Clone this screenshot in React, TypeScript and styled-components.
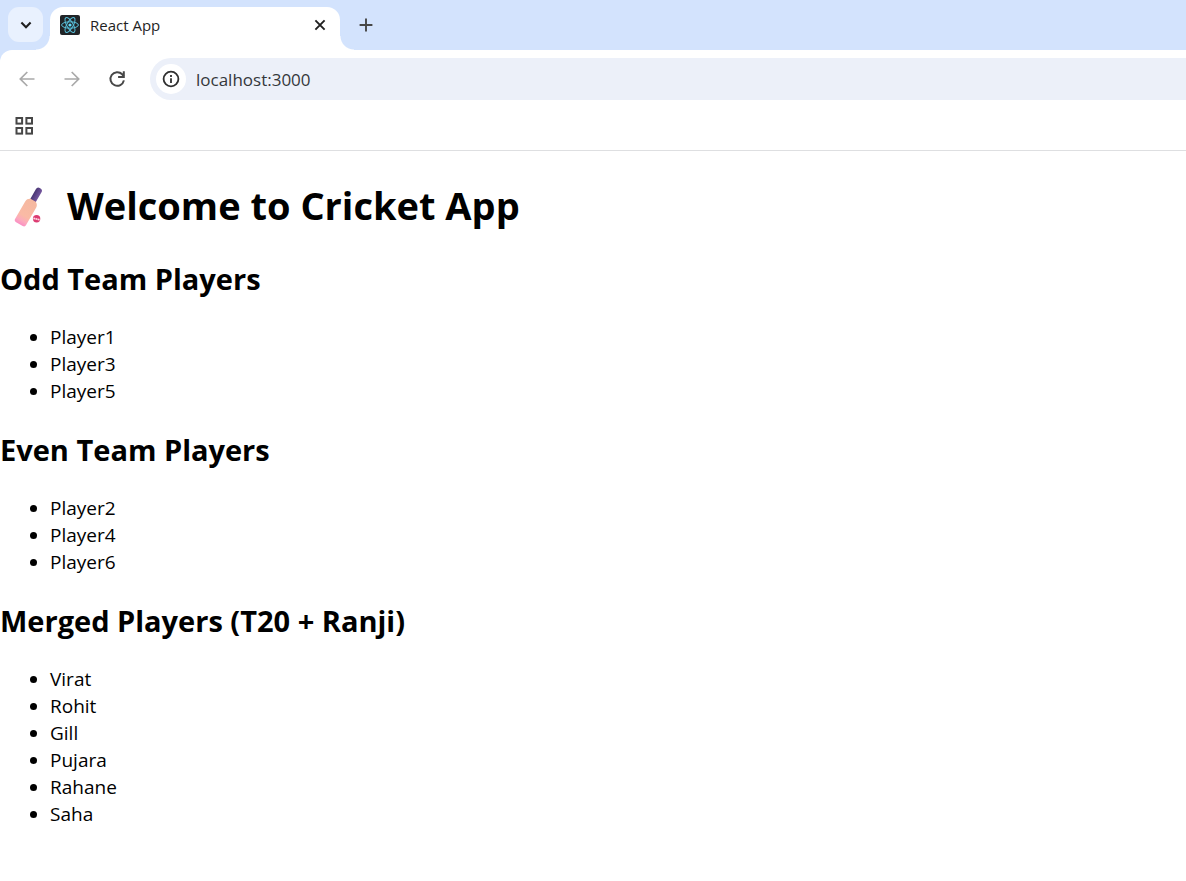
import React from "react";
import styled, { createGlobalStyle } from "styled-components";

const GlobalStyle = createGlobalStyle`
  *, *::before, *::after { box-sizing: border-box; }
  body {
    margin: 0;
    background: #ffffff;
    color: #000000;
    font-family: "Segoe UI", "Open Sans", "Noto Sans", sans-serif;
    font-size: 19px;
    line-height: 27px;
  }
`;

const TabStrip = styled.div`
  display: flex;
  align-items: flex-end;
  height: 50px;
  padding-left: 8px;
  background: #d3e3fd;
`;

const IconButton = styled.button<{ $size: number; $color?: string }>`
  display: flex;
  align-items: center;
  justify-content: center;
  flex: none;
  width: ${(p) => p.$size}px;
  height: ${(p) => p.$size}px;
  padding: 0;
  border: 0;
  border-radius: 50%;
  background: transparent;
  color: ${(p) => p.$color ?? "#474747"};
`;

const TabSearch = styled(IconButton)`
  margin-bottom: 8px;
  border-radius: 11px;
  background: #e9f1fe;
`;

const Tab = styled.div`
  position: relative;
  display: flex;
  align-items: center;
  gap: 10px;
  width: 290px;
  height: 43px;
  margin-left: 7px;
  padding: 0 10px 8px;
  border-radius: 13px 13px 0 0;
  background: #ffffff;

  &::before,
  &::after {
    content: "";
    position: absolute;
    bottom: 0;
    width: 14px;
    height: 14px;
  }
  &::before {
    right: 100%;
    background: radial-gradient(circle at 0 0, transparent 13px, #ffffff 14px);
  }
  &::after {
    left: 100%;
    background: radial-gradient(circle at 100% 0, transparent 13px, #ffffff 14px);
  }
`;

const TabTitle = styled.span`
  flex: 1;
  font-size: 15px;
  line-height: 20px;
  color: #1f1f1f;
`;

const NewTab = styled(IconButton)`
  margin: 0 0 8px 9px;
`;

const ToolbarWrap = styled.div`
  background: #d3e3fd;
`;

const Toolbar = styled.div`
  display: flex;
  align-items: center;
  height: 58px;
  padding-left: 9px;
  border-radius: 12px 0 0 0;
  background: #ffffff;
`;

const NavButtons = styled.div`
  display: flex;
  gap: 9px;
  margin-right: 15px;
`;

const AddressBar = styled.label`
  display: flex;
  align-items: center;
  gap: 10px;
  flex: 1;
  min-width: 0;
  height: 42px;
  padding-left: 6px;
  border-radius: 21px 0 0 21px;
  background: #ecf0f9;
`;

const SiteInfo = styled(IconButton)`
  background: #ffffff;
`;

const AddressInput = styled.input`
  flex: 1;
  min-width: 0;
  height: 26px;
  padding: 0;
  border: 0;
  outline: 0;
  background: transparent;
  color: #34373b;
  font: inherit;
  font-size: 17px;
`;

const BookmarksBar = styled.div`
  display: flex;
  align-items: center;
  height: 43px;
  padding: 0 0 6px 9px;
  border-bottom: 1px solid #dedfe1;
`;

const PageTitle = styled.h1`
  display: flex;
  align-items: center;
  gap: 11px;
  margin: 28px 0 27px;
  font-size: 38px;
  font-weight: 700;
  line-height: 53px;
`;

const TeamTitle = styled.h2`
  margin: 25px 0;
  font-size: 29px;
  font-weight: 700;
  line-height: 40px;
`;

const PlayerList = styled.ul`
  margin: 25px 0;
  padding-left: 50px;
`;

const Chevron = () => (
  <svg width="16" height="16" viewBox="0 0 16 16" fill="none" stroke="#1f1f1f" strokeWidth="2.1">
    <path d="M3.4 5.6 8 10.2l4.6-4.6" />
  </svg>
);

const ReactLogo = () => (
  <svg width="20" height="20" viewBox="0 0 20 20" fill="none" stroke="#58bfd9" strokeWidth="1">
    <rect width="20" height="20" rx="2" fill="#212427" stroke="none" />
    <ellipse cx="10" cy="10" rx="8.4" ry="3.2" />
    <ellipse cx="10" cy="10" rx="8.4" ry="3.2" transform="rotate(60 10 10)" />
    <ellipse cx="10" cy="10" rx="8.4" ry="3.2" transform="rotate(120 10 10)" />
    <circle cx="10" cy="10" r="1.6" fill="#61dafb" stroke="none" />
  </svg>
);

const Close = () => (
  <svg width="12" height="12" viewBox="0 0 12 12" stroke="#1f1f1f" strokeWidth="1.9">
    <path d="m1.4 1.4 9.2 9.2M10.6 1.4l-9.2 9.2" />
  </svg>
);

const Plus = () => (
  <svg width="14" height="14" viewBox="0 0 14 14" stroke="currentColor" strokeWidth="1.9">
    <path d="M7 .6v12.8M.6 7h12.8" />
  </svg>
);

const Arrow = ({ forward = false }: { forward?: boolean }) => (
  <svg width="16" height="16" viewBox="0 0 16 16" fill="none" stroke="currentColor" strokeWidth="1.7">
    {forward ? <path d="M.5 8h14M7.7 1l7 7-7 7" /> : <path d="M15.5 8h-14M8.3 1l-7 7 7 7" />}
  </svg>
);

const Reload = () => (
  <svg width="18" height="18" viewBox="0 0 18 18" fill="none" stroke="currentColor" strokeWidth="2">
    <path d="M15.9 10.4A6.8 6.8 0 1 1 14.2 4.3l1.5 1.9" />
    <path d="M15.8 1.2v5.900H10.100" />
  </svg>
);

const Info = () => (
  <svg width="18" height="18" viewBox="0 0 18 18" fill="none" stroke="#303030" strokeWidth="1.8">
    <circle cx="9" cy="9" r="7.4" />
    <path d="M9 8.2v4.7M9 5v1.9" />
  </svg>
);

const Apps = () => (
  <svg width="18" height="18" viewBox="0 0 18 18" fill="none" stroke="currentColor" strokeWidth="2">
    <rect x="1.500" y="1" width="5.600" height="5.600" />
    <rect x="11.400" y="1" width="5.600" height="5.600" />
    <rect x="1.500" y="11" width="5.600" height="5.600" />
    <rect x="11.400" y="11" width="5.600" height="5.600" />
  </svg>
);

const CricketBat = () => (
  <svg width="56" height="53" viewBox="0 1 56 53" role="img" aria-label="Cricket bat and ball">
    <defs>
      <linearGradient id="blade" x1="0" y1="0" x2="0" y2="1">
        <stop offset="0" stopColor="#f5b9a0" />
        <stop offset="0.65" stopColor="#fabaa5" />
        <stop offset="0.85" stopColor="#fca9bd" />
        <stop offset="1" stopColor="#fa8fc4" />
      </linearGradient>
      <linearGradient id="handle" x1="0" y1="0" x2="1" y2="0">
        <stop offset="0" stopColor="#493674" />
        <stop offset="1" stopColor="#75579f" />
      </linearGradient>
    </defs>
    <g transform="rotate(30 28 28)">
      <rect x="26.400" y="6.500" width="6.400" height="17" rx="2.800" fill="url(#handle)" />
      <path
        d="M26.600 20.500h6c2 1 3.300 2.500 3.300 5v20q0 2.500-2.500 2.500h-7.600q-2.500 0-2.500-2.500v-20c0-2.500 1.300-4 3.300-5z"
        fill="url(#blade)"
      />
    </g>
    <circle cx="36.600" cy="40.700" r="3.700" fill="#dc3c72" />
    <path d="m33.400 40.300 6.500 1.500" stroke="#ffd9e4" strokeWidth="1.700" strokeDasharray="1.700 .4" />
  </svg>
);

const teams = [
  { title: "Odd Team Players", players: ["Player1", "Player3", "Player5"] },
  { title: "Even Team Players", players: ["Player2", "Player4", "Player6"] },
  {
    title: "Merged Players (T20 + Ranji)",
    players: ["Virat", "Rohit", "Gill", "Pujara", "Rahane", "Saha"],
  },
];

export default function App() {
  return (
    <>
      <GlobalStyle />
      <header>
        <TabStrip>
          <TabSearch $size={35} aria-label="Search tabs">
            <Chevron />
          </TabSearch>
          <Tab>
            <ReactLogo />
            <TabTitle>React App</TabTitle>
            <IconButton $size={20} aria-label="Close tab">
              <Close />
            </IconButton>
          </Tab>
          <NewTab $size={34} aria-label="New tab">
            <Plus />
          </NewTab>
        </TabStrip>
        <ToolbarWrap>
          <Toolbar>
            <NavButtons>
              <IconButton $size={36} $color="#a9a9a9" aria-label="Back">
                <Arrow />
              </IconButton>
              <IconButton $size={36} $color="#a9a9a9" aria-label="Forward">
                <Arrow forward />
              </IconButton>
              <IconButton $size={36} aria-label="Reload">
                <Reload />
              </IconButton>
            </NavButtons>
            <AddressBar>
              <SiteInfo $size={30} aria-label="View site information">
                <Info />
              </SiteInfo>
              <AddressInput type="text" aria-label="Address" defaultValue="localhost:3000" />
            </AddressBar>
          </Toolbar>
        </ToolbarWrap>
        <BookmarksBar>
          <IconButton $size={30} aria-label="Apps">
            <Apps />
          </IconButton>
        </BookmarksBar>
      </header>
      <main>
        <PageTitle>
          <CricketBat />
          Welcome to Cricket App
        </PageTitle>
        {teams.map((team) => (
          <section key={team.title}>
            <TeamTitle>{team.title}</TeamTitle>
            <PlayerList>
              {team.players.map((player) => (
                <li key={player}>{player}</li>
              ))}
            </PlayerList>
          </section>
        ))}
      </main>
    </>
  );
}
